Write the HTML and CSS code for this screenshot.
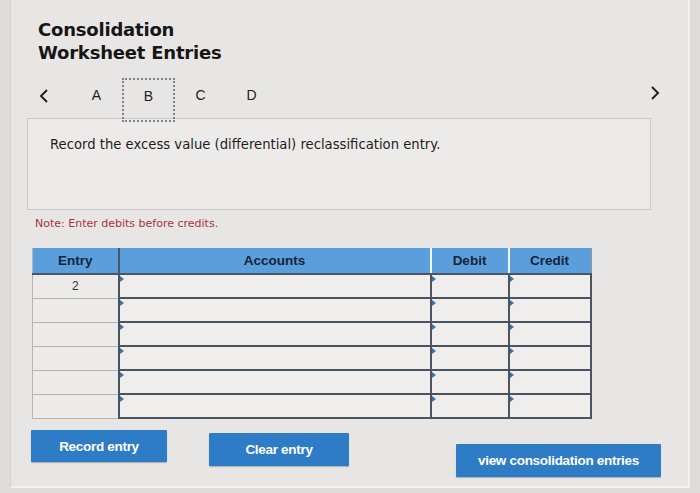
FILE: index.html
```html
<!DOCTYPE html>
<html>
<head>
<meta charset="utf-8">
<link rel="stylesheet" href="styles.css">
</head>
<body>
<div class="panel">
  <h1 class="title">Consolidation<br>Worksheet Entries</h1>
  <div class="tabs">
    <span class="chev chev-left">
      <svg width="12" height="16" viewBox="0 0 12 16"><path d="M9 2 L3 8 L9 14" fill="none" stroke="#222" stroke-width="2"/></svg>
    </span>
    <span class="tab">A</span>
    <span class="tab tab-active">B</span>
    <span class="tab">C</span>
    <span class="tab">D</span>
    <span class="chev chev-right">
      <svg width="12" height="16" viewBox="0 0 12 16"><path d="M3 2 L9 8 L3 14" fill="none" stroke="#222" stroke-width="2"/></svg>
    </span>
  </div>
  <div class="prompt">Record the excess value (differential) reclassification entry.</div>
  <p class="note">Note: Enter debits before credits.</p>
  <table class="grid">
    <colgroup>
      <col class="w-entry"><col class="w-acc"><col class="w-deb"><col class="w-cred">
    </colgroup>
    <thead>
      <tr><th class="c-entry">Entry</th><th class="c-acc">Accounts</th><th class="c-deb">Debit</th><th class="c-cred">Credit</th></tr>
    </thead>
    <tbody>
      <tr><td class="entry">2</td><td class="in"></td><td class="in"></td><td class="in"></td></tr>
      <tr><td class="entry"></td><td class="in"></td><td class="in"></td><td class="in"></td></tr>
      <tr><td class="entry"></td><td class="in"></td><td class="in"></td><td class="in"></td></tr>
      <tr><td class="entry"></td><td class="in"></td><td class="in"></td><td class="in"></td></tr>
      <tr><td class="entry"></td><td class="in"></td><td class="in"></td><td class="in"></td></tr>
      <tr><td class="entry"></td><td class="in"></td><td class="in"></td><td class="in"></td></tr>
    </tbody>
  </table>
  <div class="actions">
    <button class="btn btn-record">Record entry</button>
    <button class="btn btn-clear">Clear entry</button>
    <button class="btn btn-view">view consolidation entries</button>
  </div>
</div>
</body>
</html>
```

FILE: styles.css
```css
html, body {
  margin: 0;
  padding: 0;
}
body {
  background: #dedddb;
  width: 700px;
  height: 493px;
  overflow: hidden;
  font-family: "DejaVu Sans", Verdana, sans-serif;
}
.panel {
  margin-left: 10px;
  width: 680px;
  height: 488px;
  background: #e7e6e4;
  border-left: 1px solid #d2d2d0;
  border-right: 2px solid #f2f2f0;
  border-bottom: 2px solid #f2f2f0;
  box-sizing: border-box;
  padding: 18px 0 0 0;
}
.title {
  margin: 0 0 0 27px;
  font-size: 18px;
  line-height: 23px;
  font-weight: bold;
  color: #161616;
  letter-spacing: -0.2px;
}
.tabs {
  display: flex;
  align-items: center;
  height: 40px;
  margin-top: 14px;
}
.chev {
  display: flex;
  align-items: center;
}
.chev-left {
  margin-left: 27px;
  width: 33px;
  margin-top: -4px;
}
.chev-right {
  margin-left: auto;
  margin-right: 27px;
  margin-top: -10px;
}
.tab {
  width: 51px;
  height: 40px;
  box-sizing: border-box;
  display: flex;
  align-items: center;
  justify-content: center;
  font-family: "Liberation Sans", Arial, sans-serif;
  font-size: 14px;
  color: #222;
  padding-bottom: 6px;
}
.tab-active {
  width: 53px;
  height: 44px;
  margin-top: 4px;
  border: 2px dotted #7d8290;
  padding-bottom: 8px;
}
.prompt {
  margin: 0 37px 0 16px;
  height: 92px;
  box-sizing: border-box;
  background: #ecebe9;
  border: 1px solid #c9c9c7;
  padding: 18px 0 0 22px;
  font-size: 13.2px;
  color: #1d1d1d;
}
.note {
  margin: 7px 0 0 24px;
  font-size: 11px;
  line-height: 14px;
  color: #a8343c;
}
.grid {
  margin: 17px 0 0 21px;
  border-collapse: collapse;
  width: 558px;
  table-layout: fixed;
}
.w-entry { width: 86px; }
.w-acc { width: 312px; }
.w-deb { width: 78px; }
.w-cred { width: 82px; }
.grid th {
  background: #5a9edb;
  height: 25px;
  padding: 0;
  font-family: "Liberation Sans", Arial, sans-serif;
  font-weight: bold;
  font-size: 13.5px;
  color: #15253a;
  border-left: 2px solid #f4f4f2;
  border-bottom: 2px solid #4b5563;
}
.grid th.c-entry { border-left: 1px solid #a9b8c8; }
.grid th.c-acc { border-left: 2px solid #4b5563; }
.grid th.c-cred { border-right: 2px solid #7f9ab8; }
.grid td {
  height: 22px;
  padding: 0;
}
.grid td.entry {
  border: 1px solid #b5b5b3;
  background: #ecebe9;
  text-align: center;
  font-family: "Liberation Sans", Arial, sans-serif;
  font-size: 12px;
  color: #333;
  vertical-align: middle;
}
.grid td.in {
  border: 2px solid #4b5260;
  background: #efeeec;
  position: relative;
}
.grid td.in::before {
  content: "";
  position: absolute;
  left: 0;
  top: 1px;
  border-top: 3px solid transparent;
  border-bottom: 3px solid transparent;
  border-left: 4px solid #3e6fa6;
}
.actions {
  display: flex;
  align-items: flex-start;
  margin-top: 11px;
  padding-left: 20px;
}
.btn {
  border: none;
  border-radius: 1px;
  background: #2e7cc5;
  color: #fff;
  font-family: "Liberation Sans", Arial, sans-serif;
  font-weight: bold;
  font-size: 13.5px;
  letter-spacing: -0.3px;
  height: 32px;
  padding: 0;
  box-shadow: 0 1px 1px rgba(0,0,0,0.25);
}
.btn-record { width: 136px; }
.btn-clear { width: 140px; margin-left: 42px; margin-top: 3px; height: 33px; }
.btn-view { width: 205px; margin-left: 107px; margin-top: 14px; height: 33px; }
```
